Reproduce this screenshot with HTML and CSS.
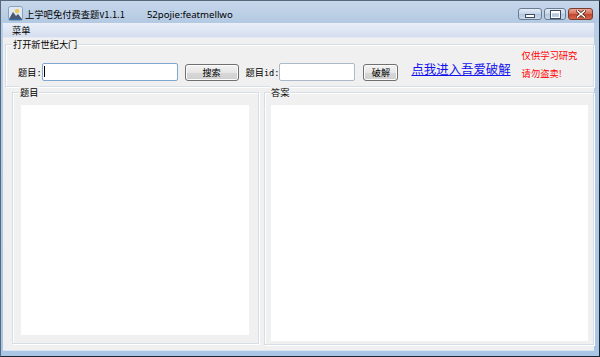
FILE: index.html
```html
<!DOCTYPE html>
<html>
<head>
<meta charset="utf-8">
<link rel="stylesheet" href="styles.css">
</head>
<body>
<div class="window">
  <div class="titlebar">
    <svg class="appicon" width="15" height="15" viewBox="0 0 15 15">
      <rect x="0.5" y="0.5" width="14" height="14" rx="2" fill="#dfe9f5" stroke="#8aa0b8"/>
      <circle cx="9" cy="5" r="2.2" fill="#f2c94c"/>
      <path d="M1 13 L5 6 L8 10 L10 8 L14 13 Z" fill="#4a5a70"/>
      <path d="M1 13 L14 13 L14 14 L1 14 Z" fill="#2f6fb5"/>
    </svg>
    <span class="title">上学吧免付费查题v1.1.1</span>
    <span class="title author">52pojie:featmellwo</span>
    <div class="controls">
      <div class="cbtn"><span class="g-min"></span></div>
      <div class="cbtn"><span class="g-max"></span></div>
      <div class="cbtn close"><svg width="10" height="8" viewBox="0 0 10 8"><path d="M1.5 1 L8.5 7 M8.5 1 L1.5 7" stroke="#5a2418" stroke-width="3" stroke-linecap="square"/><path d="M1.5 1 L8.5 7 M8.5 1 L1.5 7" stroke="#fff" stroke-width="1.6" stroke-linecap="square"/></svg></div>
    </div>
  </div>
  <div class="client">
    <div class="menubar"><span class="menu">菜单</span></div>
    <div class="group top">
      <span class="gtitle">打开新世纪大门</span>
      <div class="row">
        <span class="lbl">题目<span class="mono">:</span></span>
        <div class="field wide focused"><span class="caret"></span></div>
        <div class="btn search">搜索</div>
        <span class="lbl id">题目<span class="mono">id:</span></span>
        <div class="field narrow"></div>
        <div class="btn crack">破解</div>
        <a class="link" href="#">点我进入吾爱破解</a>
        <div class="notice">
          <span>仅供学习研究</span>
          <span>请勿盗卖!</span>
        </div>
      </div>
    </div>
    <div class="lower">
      <div class="group left">
        <span class="gtitle">题目</span>
        <div class="area"></div>
      </div>
      <div class="group right">
        <span class="gtitle">答案</span>
        <div class="area"></div>
      </div>
    </div>
  </div>
</div>
</body>
</html>
```
FILE: styles.css
```css
html, body {
  margin: 0;
  padding: 0;
  background: #fff;
}
.window {
  width: 600px;
  height: 357px;
  box-sizing: border-box;
  border: 1px solid #56687c;
  border-right-color: #1d2630;
  border-bottom-color: #1d2630;
  background: linear-gradient(#b9cfe7, #a9c6e6);
  display: flex;
  flex-direction: column;
  font-family: "Noto Sans CJK SC", "Noto Sans", sans-serif;
}
.titlebar {
  height: 22px;
  flex: none;
  display: flex;
  align-items: flex-start;
  padding: 0 6px 0 7px;
  background: linear-gradient(#c6d7ea, #b3c9e2);
}
.appicon {
  margin-top: 5px;
  flex: none;
}
.title {
  margin-left: 2px;
  margin-top: 7px;
  font-size: 9.3px;
  line-height: 13px;
  color: #000;
  white-space: nowrap;
}
.title.author {
  margin-left: 22px;
  font-family: "Noto Sans", sans-serif;
  font-size: 9.6px;
}
.controls {
  margin-left: auto;
  margin-top: 7px;
  display: flex;
  gap: 2px;
}
.cbtn {
  width: 24px;
  height: 12px;
  box-sizing: border-box;
  border: 1px solid #6a7c92;
  border-radius: 3px;
  background: linear-gradient(#e4ecf6, #c4d4e8 50%, #b3c6de 51%, #c9d9ec);
  display: flex;
  align-items: center;
  justify-content: center;
}
.cbtn:nth-child(2) { width: 22px; }
.cbtn.close {
  width: 25px;
  border-color: #7a3a2c;
  background: linear-gradient(#e9a796, #d26a52 50%, #c2452c 51%, #d4664c);
}
.g-min {
  width: 8px;
  height: 2px;
  margin-top: 4px;
  background: #fff;
  border: 1px solid #3a4a60;
}
.g-max {
  width: 7px;
  height: 4px;
  border: 1px solid #fff;
  border-top-width: 2px;
  outline: 1px solid #3a4a60;
}
.client {
  flex: 1;
  margin: 0 5px 5px 2px;
  background: #f0f0f0;
  display: flex;
  flex-direction: column;
  border-bottom: 1px solid #dbe6f2;
}
.menubar {
  height: 14px;
  flex: none;
  background: linear-gradient(#eaeff8, #d5deef);
  border-bottom: 1px solid #e6ebf3;
  display: flex;
  align-items: center;
}
.menu {
  margin-left: 9px;
  font-size: 9.2px;
  line-height: 12px;
  color: #000;
}
.group {
  box-sizing: border-box;
  border: 1px solid #d5dee6;
  box-shadow: inset 1px 1px 0 #fff, 1px 1px 0 #fff;
  display: flex;
  flex-direction: column;
}
.gtitle {
  align-self: flex-start;
  margin-top: -7px;
  background: #f0f0f0;
  padding: 0 1px;
  font-size: 9.2px;
  line-height: 13px;
  color: #000;
}
.group.top {
  margin: 6px 0 0 2px;
  height: 43px;
}
.group.top .gtitle {
  margin-left: 6px;
}
.row {
  margin-top: 11px;
  height: 20px;
  display: flex;
  align-items: center;
}
.lbl {
  font-size: 9.2px;
  color: #000;
  margin-left: 12px;
  line-height: 12px;
  white-space: nowrap;
}
.mono {
  font-family: "DejaVu Sans Mono", monospace;
  font-size: 8.6px;
}
.lbl.id {
  margin-left: 7px;
}
.field {
  height: 18px;
  box-sizing: border-box;
  background: #fff;
  border: 1px solid #abb9c9;
  border-radius: 2px;
  margin-left: 0;
}
.field.focused {
  border-color: #7fa7cf;
}
.caret {
  display: block;
  width: 1px;
  height: 11px;
  margin: 2px 0 0 1px;
  background: #000;
}
.field.wide { width: 136px; }
.field.narrow { width: 76px; }
.btn {
  height: 17px;
  box-sizing: border-box;
  border: 1px solid #707070;
  border-radius: 3px;
  background: linear-gradient(#f3f3f3, #e6e6e6 50%, #d8d8d8 51%, #cfcfcf);
  box-shadow: inset 0 0 0 1px #fcfcfc;
  font-size: 9.2px;
  line-height: 15px;
  text-align: center;
  color: #000;
}
.btn.search { width: 54px; margin-left: 7px; }
.btn.crack { width: 35px; margin-left: 8px; }
.link {
  margin-left: 13px;
  align-self: flex-start;
  font-size: 12.4px;
  line-height: 15px;
  color: #1010ee;
  text-decoration: underline;
}
.notice {
  align-self: flex-start;
  margin-top: -13px;
  margin-left: 11px;
  display: flex;
  flex-direction: column;
  gap: 6px;
  color: #ff0000;
  font-size: 9.3px;
  line-height: 12px;
}
.lower {
  flex: 1;
  display: flex;
  margin: 5px 0 0 9px;
  gap: 5px;
}
.group.left {
  width: 247px;
  height: 252px;
  padding: 0 9px 8px 8px;
}
.group.left .gtitle { margin-left: -2px; margin-bottom: 6px; }
.group.right {
  flex: 1;
  height: 253px;
  padding: 0 5px 3px 6px;
}
.group.right .gtitle { margin-left: -1px; margin-bottom: 6px; }
.area {
  flex: 1;
  background: #fff;
}
```
